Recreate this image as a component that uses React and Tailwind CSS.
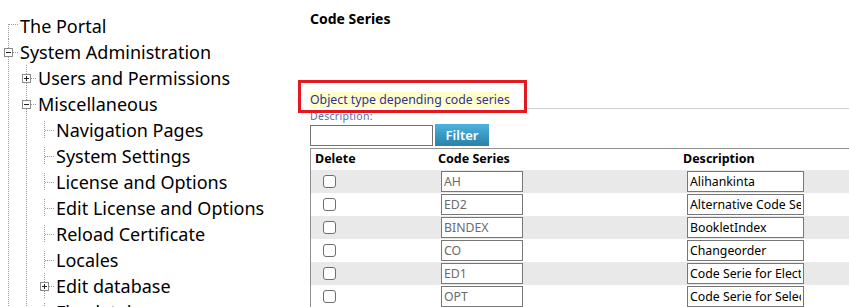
import React from "react";

const DOT = "#9a9a9a";

function Pipe() {
  return (
    <svg width="18" height="26" className="shrink-0 block">
      <line x1="8.5" y1="0" x2="8.5" y2="26" stroke={DOT} strokeDasharray="1 1" />
    </svg>
  );
}

function Blank() {
  return <div className="w-[18px] h-[26px] shrink-0" />;
}

function Connector({ type }) {
  if (type === "first") {
    return (
      <svg width="18" height="26" className="shrink-0 block">
        <line x1="8.5" y1="11" x2="8.5" y2="26" stroke={DOT} strokeDasharray="1 1" />
        <line x1="9" y1="11.5" x2="18" y2="11.5" stroke={DOT} strokeDasharray="1 1" />
      </svg>
    );
  }
  if (type === "tee") {
    return (
      <svg width="18" height="26" className="shrink-0 block">
        <line x1="8.5" y1="4" x2="8.5" y2="21" stroke={DOT} strokeDasharray="1 1" />
        <line x1="9" y1="13.5" x2="18" y2="13.5" stroke={DOT} strokeDasharray="1 1" />
      </svg>
    );
  }
  const plus = type === "plus";
  return (
    <svg width="18" height="26" className="shrink-0 block">
      <line x1="8.5" y1="0" x2="8.5" y2="9" stroke={DOT} strokeDasharray="1 1" />
      <line x1="8.5" y1="18" x2="8.5" y2="26" stroke={DOT} strokeDasharray="1 1" />
      <line x1="13" y1="13.5" x2="18" y2="13.5" stroke={DOT} strokeDasharray="1 1" />
      <rect x="4.5" y="9.5" width="8" height="8" fill="#fff" stroke="#8a8a8a" />
      <line x1="6" y1="13.5" x2="11" y2="13.5" stroke="#222" />
      {plus && <line x1="8.5" y1="11" x2="8.5" y2="16" stroke="#222" />}
    </svg>
  );
}

const tree = [
  { guides: [], conn: "first", text: "The Portal" },
  { guides: [], conn: "minus", text: "System Administration" },
  { guides: ["pipe"], conn: "plus", text: "Users and Permissions" },
  { guides: ["pipe"], conn: "minus", text: "Miscellaneous" },
  { guides: ["pipe", "pipe"], conn: "tee", text: "Navigation Pages" },
  { guides: ["pipe", "pipe"], conn: "tee", text: "System Settings" },
  { guides: ["pipe", "pipe"], conn: "tee", text: "License and Options" },
  { guides: ["pipe", "pipe"], conn: "tee", text: "Edit License and Options" },
  { guides: ["pipe", "pipe"], conn: "tee", text: "Reload Certificate" },
  { guides: ["pipe", "pipe"], conn: "tee", text: "Locales" },
  { guides: ["pipe", "pipe"], conn: "plus", text: "Edit database" },
  { guides: ["pipe", "pipe"], conn: "tee", text: "Flexdatabase" },
];

const rows = [
  { code: "AH", desc: "Alihankinta" },
  { code: "ED2", desc: "Alternative Code Series" },
  { code: "BINDEX", desc: "BookletIndex" },
  { code: "CO", desc: "Changeorder" },
  { code: "ED1", desc: "Code Serie for Electrical" },
  { code: "OPT", desc: "Code Serie for Selection" },
];

export default function App() {
  return (
    <div className="flex w-[849px] h-[307px] overflow-hidden bg-white font-['Noto_Sans',sans-serif]">
      {/* Tree */}
      <div className="w-[310px] shrink-0 pt-[13px]">
        {tree.map((n, i) => (
          <div key={i} className="flex h-[26px] items-center">
            {n.guides.map((g, j) => (g === "pipe" ? <Pipe key={j} /> : <Blank key={j} />))}
            <Connector type={n.conn} />
            <span className="ml-[2px] text-[18px] leading-[26px] text-black whitespace-nowrap">{n.text}</span>
          </div>
        ))}
      </div>

      {/* Content */}
      <div className="flex-1 min-w-0">
        <h2 className="mt-[10px] text-[14px] leading-[18px] font-bold text-black">Code Series</h2>

        <div className="relative mt-[64px] flex h-[17px]">
          <div className="w-[217px] shrink-0">
            <div className="w-fit h-[16px] bg-[#ffffcc] text-[12.3px] leading-[15px] text-[#2f3290] whitespace-nowrap">
              Object type depending code series
            </div>
          </div>
          <div className="flex-1 border-b border-[#cfcfcf]" />
          <div className="absolute left-[-12px] top-[-12px] w-[229px] h-[33px] border-[3px] border-[#e2191f] pointer-events-none" />
        </div>

        <div className="h-[15px] text-[10.5px] leading-[15px] tracking-[0.3px] text-[#5a6cab]">Description:</div>

        <div className="flex items-start gap-[2px]">
          <input
            type="text"
            className="mt-[1px] w-[123px] h-[21px] border border-[#737373] bg-white outline-none"
          />
          <button className="w-[54px] h-[22px] bg-gradient-to-b from-[#4cb4e0] to-[#2a80a8] text-white text-[13px] font-semibold leading-[22px]">
            Filter
          </button>
        </div>

        <div className="mt-[2px] w-[600px] border-t border-l border-[#8f8f8f]">
          <div className="flex h-[21px] items-center text-[12.5px] font-bold text-black">
            <div className="w-[123px] shrink-0 pl-[4px]">Delete</div>
            <div className="w-[245px] shrink-0 pl-[4px]">Code Series</div>
            <div className="flex-1 pl-[4px]">Description</div>
          </div>
          {rows.map((r, i) => (
            <div key={i} className={`flex h-[23px] items-center ${i % 2 === 0 ? "bg-[#e9e9e9]" : "bg-white"}`}>
              <div className="w-[123px] shrink-0 pl-[12px] flex items-center">
                <input
                  type="checkbox"
                  readOnly
                  className="appearance-none w-[13px] h-[13px] rounded-[3px] border border-[#6f6f6f] bg-white m-0"
                />
              </div>
              <div className="w-[245px] shrink-0 pl-[7px] flex items-center">
                <input
                  type="text"
                  readOnly
                  defaultValue={r.code}
                  className="w-[82px] h-[21px] border border-[#777] bg-white px-[2px] text-[12.3px] text-[#6b6b6b] outline-none font-['Noto_Sans',sans-serif]"
                />
              </div>
              <div className="flex-1 pl-[8px] flex items-center">
                <input
                  type="text"
                  readOnly
                  defaultValue={r.desc}
                  className="w-[117px] h-[21px] border border-[#777] bg-white px-[2px] text-[12.3px] text-black outline-none font-['Noto_Sans',sans-serif]"
                />
              </div>
            </div>
          ))}
        </div>
      </div>
    </div>
  );
}
